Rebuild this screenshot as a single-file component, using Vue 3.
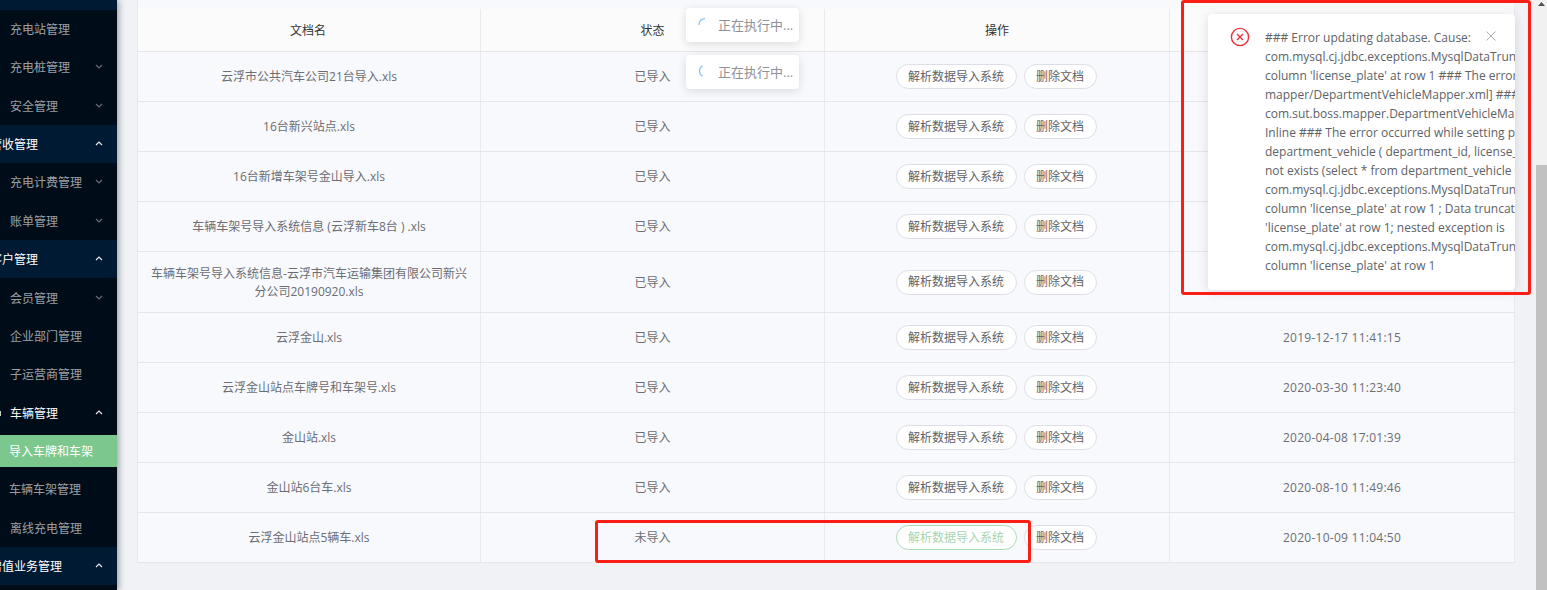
<script setup>
const menu = [
  { t: '充电站管理' },
  { t: '充电桩管理', c: 'down' },
  { t: '安全管理', c: 'down' },
  { t: '营收管理', c: 'up', head: true },
  { t: '充电计费管理', c: 'down' },
  { t: '账单管理', c: 'down' },
  { t: '客户管理', c: 'up', head: true },
  { t: '会员管理', c: 'down' },
  { t: '企业部门管理' },
  { t: '子运营商管理' },
  { t: '车辆管理', c: 'up', open: true },
  { t: '导入车牌和车架', active: true },
  { t: '车辆车架管理', shift: true },
  { t: '离线充电管理' },
  { t: '增值业务管理', c: 'up', head: true },
]
const rows = [
  { n: '云浮市公共汽车公司21台导入.xls', s: '已导入', d: '' },
  { n: '16台新兴站点.xls', s: '已导入', d: '' },
  { n: '16台新增车架号金山导入.xls', s: '已导入', d: '' },
  { n: '车辆车架号导入系统信息 (云浮新车8台 ) .xls', s: '已导入', d: '' },
  { n: '车辆车架号导入系统信息-云浮市汽车运输集团有限公司新兴分公司20190920.xls', s: '已导入', d: '', tall: true },
  { n: '云浮金山.xls', s: '已导入', d: '2019-12-17 11:41:15' },
  { n: '云浮金山站点车牌号和车架号.xls', s: '已导入', d: '2020-03-30 11:23:40' },
  { n: '金山站.xls', s: '已导入', d: '2020-04-08 17:01:39' },
  { n: '金山站6台车.xls', s: '已导入', d: '2020-08-10 11:49:46' },
  { n: '云浮金山站点5辆车.xls', s: '未导入', d: '2020-10-09 11:04:50', hover: true },
]
const lines = [
  '### Error updating database. Cause:',
  'com.mysql.cj.jdbc.exceptions.MysqlDataTruncation: Data truncation: Data too long for',
  "column 'license_plate' at row 1 ### The error may exist in file",
  'mapper/DepartmentVehicleMapper.xml] ### The error may involve',
  'com.sut.boss.mapper.DepartmentVehicleMapper.insert',
  'Inline ### The error occurred while setting parameters ### SQL: insert into',
  'department_vehicle ( department_id, license_plate )',
  'not exists (select * from department_vehicle where license_plate = ?)',
  'com.mysql.cj.jdbc.exceptions.MysqlDataTruncation: Data truncation: Data too long for',
  "column 'license_plate' at row 1 ; Data truncation: Data too long for column",
  "'license_plate' at row 1; nested exception is",
  'com.mysql.cj.jdbc.exceptions.MysqlDataTruncation: Data truncation: Data too long for',
  "column 'license_plate' at row 1",
]
</script>

<template>
  <div class="page">
    <aside class="side">
      <div class="strip"></div>
      <div
        v-for="m in menu"
        :key="m.t"
        class="item"
        :class="{ head: m.head, open: m.open, active: m.active, shift: m.shift }"
      >
        <span class="bullet" v-if="m.open"></span>
        <span class="label">{{ m.t }}</span>
        <svg v-if="m.c" class="chev" viewBox="0 0 8 5" width="8" height="5">
          <path :d="m.c === 'up' ? 'M1 4 L4 1 L7 4' : 'M1 1 L4 4 L7 1'" fill="none" stroke="currentColor" stroke-width="1.2" />
        </svg>
      </div>
    </aside>

    <main class="main">
      <div class="card-top"></div>
      <table class="table">
        <colgroup>
          <col class="c1" /><col class="c2" /><col class="c3" /><col class="c4" />
        </colgroup>
        <thead>
          <tr>
            <th>文档名</th>
            <th>状态</th>
            <th>操作</th>
            <th></th>
          </tr>
        </thead>
        <tbody>
          <tr v-for="r in rows" :key="r.n" :class="{ tall: r.tall }">
            <td>{{ r.n }}</td>
            <td>{{ r.s }}</td>
            <td class="op-cell">
              <div class="ops">
                <button class="btn wide" :class="{ hover: r.hover }">解析数据导入系统</button>
                <button class="btn narrow">删除文档</button>
              </div>
            </td>
            <td class="date">{{ r.d }}</td>
          </tr>
        </tbody>
      </table>
    </main>

    <div class="scrollbar">
      <svg class="arrow" viewBox="0 0 7 4" width="7" height="4"><path d="M0 4 L3.5 0 L7 4 Z" fill="#505050" /></svg>
      <div class="thumb"></div>
    </div>

    <div class="toast t1">
      <svg class="spin" viewBox="0 0 14 14" width="14" height="14">
        <path d="M1 8 A6 6 0 0 1 7 1.6" fill="none" stroke="#8cc5ff" stroke-width="1.3" />
      </svg>
      <span>正在执行中...</span>
    </div>
    <div class="toast t2">
      <svg class="spin" viewBox="0 0 14 14" width="14" height="14">
        <path d="M4.5 1.8 A6 6 0 0 0 4.5 12.2" fill="none" stroke="#8cc5ff" stroke-width="1.3" />
      </svg>
      <span>正在执行中...</span>
    </div>

    <div class="notify">
      <svg class="err" viewBox="0 0 20 20" width="20" height="20">
        <circle cx="10" cy="10" r="8.6" fill="none" stroke="#f0303f" stroke-width="1.4" />
        <path d="M7 7 L13 13 M13 7 L7 13" fill="none" stroke="#f0303f" stroke-width="1.4" />
      </svg>
      <div class="msg">
        <div v-for="(l, i) in lines" :key="i" class="line">{{ l }}</div>
      </div>
      <svg class="close" viewBox="0 0 10 10" width="10" height="10">
        <path d="M0.5 0.5 L9.5 9.5 M9.5 0.5 L0.5 9.5" fill="none" stroke="#a9abb0" stroke-width="1" />
      </svg>
    </div>

    <div class="mark m1"></div>
    <div class="mark m2"></div>
  </div>
</template>

<style scoped>
.page {
  position: relative;
  display: flex;
  width: 1547px;
  height: 590px;
  overflow: hidden;
  background: #f0f2f5;
  font-family: "Open Sans", "Noto Sans CJK SC", sans-serif;
  font-size: 12px;
  color: #606266;
}
.side {
  position: relative;
  z-index: 1;
  flex: 0 0 117px;
  background: #000c17;
  box-shadow: 2px 0 6px rgba(0, 21, 41, 0.35);
  overflow: hidden;
}
.strip {
  height: 9.6px;
  background: #001a33;
}
.item {
  position: relative;
  display: flex;
  align-items: center;
  height: 38.4px;
  padding-left: 10px;
  color: rgba(255, 255, 255, 0.62);
  white-space: nowrap;
}
.item.shift {
  padding-left: 9px;
}
.item.head {
  padding-left: 0;
  background: #001a33;
  color: #fff;
}
.item.head .label {
  margin-left: -10px;
}
.item.open {
  color: #fff;
}
.item.active {
  height: 32px;
  margin: 3.2px 0;
  padding-left: 9px;
  background: #7bc78e;
  color: #fff;
}
.bullet {
  position: absolute;
  left: 0;
  top: 17px;
  width: 1px;
  height: 5px;
  background: #ccc;
}
.chev {
  position: absolute;
  left: 95px;
  top: 50%;
  margin-top: -3px;
  color: rgba(255, 255, 255, 0.4);
}
.item.head .chev,
.item.open .chev {
  color: #e8e8e8;
}
.main {
  flex: 1;
  padding: 0 22px 0 20px;
  min-width: 0;
}
.card-top {
  height: 9px;
  background: #f8f9fd;
  border-left: 1px solid #e9e9ee;
}
.table {
  width: 1377px;
  table-layout: fixed;
  border-collapse: collapse;
  background: #f8f9fd;
  border-left: 1px solid #e9e9ee;
}
.c1 { width: 343px; }
.c2 { width: 344px; }
.c3 { width: 345px; }
.c4 { width: 345px; }
th {
  box-sizing: border-box;
  height: 42px;
  padding: 0;
  background: #fbfbfb;
  border-right: 1px solid #e9e9ee;
  border-bottom: 1px solid #e6e6ea;
  font-weight: 400;
  color: #333;
}
th:first-child {
  padding-right: 2px;
}
td {
  box-sizing: border-box;
  height: 50px;
  padding: 2px 12px 0;
  border-right: 1px solid #e9e9ee;
  border-bottom: 1px solid #e6e6ea;
  text-align: center;
  line-height: 18px;
  color: #6b6d72;
}
td.op-cell {
  padding: 1px 14px 0 12px;
}
td.date {
  letter-spacing: 0.26px;
}
tr.tall td {
  height: 61px;
}
.ops {
  display: flex;
  justify-content: center;
  gap: 7px;
}
.btn {
  box-sizing: border-box;
  height: 25px;
  padding: 0;
  border: 1px solid #dcdfe6;
  border-radius: 13px;
  background: #fff;
  font: inherit;
  color: #606266;
  white-space: nowrap;
}
.btn.wide { width: 121px; }
.btn.narrow { width: 73px; }
.btn.hover {
  border-color: #a9dcb7;
  color: #a5d6b2;
}
.scrollbar {
  position: relative;
  flex: 0 0 11px;
  display: flex;
  flex-direction: column;
  background: #f1f1f1;
}
.arrow {
  position: absolute;
  top: 2px;
  left: 2px;
}
.thumb {
  margin-top: 165px;
  flex: 1;
  background: #c1c1c1;
}
.toast {
  position: absolute;
  left: 686px;
  display: flex;
  align-items: center;
  width: 113px;
  height: 34px;
  padding: 0 0 2px 11px;
  box-sizing: border-box;
  background: #fff;
  border-radius: 4px;
  box-shadow: 0 2px 10px rgba(0, 0, 0, 0.13);
  font-size: 13px;
  color: #8f9196;
}
.t1 { top: 8px; }
.t2 { top: 55px; }
.spin {
  margin-right: 6px;
  margin-left: 1px;
  flex: none;
}
.notify {
  position: absolute;
  left: 1208px;
  top: 14px;
  width: 307px;
  height: 276px;
  box-sizing: border-box;
  background: #fff;
  border-radius: 4px;
  box-shadow: 0 2px 12px rgba(0, 0, 0, 0.12);
  overflow: hidden;
}
.err {
  position: absolute;
  left: 21.5px;
  top: 12.5px;
}
.msg {
  position: absolute;
  left: 57px;
  top: 14px;
  white-space: nowrap;
  line-height: 19px;
  color: #606266;
}
.close {
  position: absolute;
  left: 278px;
  top: 17px;
}
.mark {
  position: absolute;
  box-sizing: border-box;
  border: 3px solid #fb1e14;
  border-radius: 3px;
  pointer-events: none;
}
.m1 {
  left: 1181px;
  top: 0;
  width: 350px;
  height: 295px;
}
.m2 {
  left: 595px;
  top: 520px;
  width: 436px;
  height: 43px;
}
</style>
